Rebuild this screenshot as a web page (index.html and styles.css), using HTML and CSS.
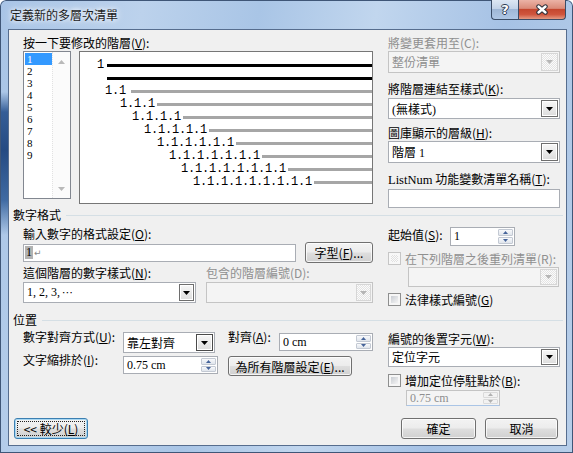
FILE: index.html
```html
<!DOCTYPE html>
<html lang="zh-Hant">
<head>
<meta charset="utf-8">
<title>定義新的多層次清單</title>
<link rel="stylesheet" href="styles.css">
</head>
<body>
<div class="window">
  <div class="titlebar">
    <div class="title">定義新的多層次清單</div>
    <div class="caption">
      <div class="cap cap-help">?</div>
      <div class="cap cap-close">
        <svg width="14" height="11" viewBox="0 0 14 11"><path d="M3.5 2.5L10.5 8.5M10.5 2.5L3.5 8.5" stroke="#2b2f3a" stroke-width="4.4" stroke-linecap="round"/><path d="M3.5 2.5L10.5 8.5M10.5 2.5L3.5 8.5" stroke="#fff" stroke-width="2.4" stroke-linecap="round"/></svg>
      </div>
    </div>
  </div>

  <div class="client">
    <div class="two">
      <div class="col">
        <div class="lbl">按一下要修改的階層(<u>V</u>):</div>
        <div class="lists">
          <div class="listbox">
            <div class="items">
              <div class="item sel">1</div>
              <div class="item">2</div>
              <div class="item">3</div>
              <div class="item">4</div>
              <div class="item">5</div>
              <div class="item">6</div>
              <div class="item">7</div>
              <div class="item">8</div>
              <div class="item">9</div>
            </div>
            <div class="vscroll">
              <svg width="7" height="4" viewBox="0 0 7 4"><path d="M3.5 0L7 4H0z"/></svg>
              <svg width="7" height="4" viewBox="0 0 7 4"><path d="M0 0h7L3.5 4z"/></svg>
            </div>
          </div>
          <div class="preview">
            <div class="pv lv1"><span class="num">1</span><span class="bar black"></span></div>
            <div class="pv lv1c"><span class="bar black"></span></div>
            <div class="pv lv2"><span class="num">1.1</span><span class="bar"></span></div>
            <div class="pv lv3"><span class="num">1.1.1</span><span class="bar"></span></div>
            <div class="pv lv4"><span class="num">1.1.1.1</span><span class="bar"></span></div>
            <div class="pv lv5"><span class="num">1.1.1.1.1</span><span class="bar"></span></div>
            <div class="pv lv6"><span class="num">1.1.1.1.1.1</span><span class="bar"></span></div>
            <div class="pv lv7"><span class="num">1.1.1.1.1.1.1</span><span class="bar"></span></div>
            <div class="pv lv8"><span class="num">1.1.1.1.1.1.1.1</span><span class="bar"></span></div>
            <div class="pv lv9"><span class="num">1.1.1.1.1.1.1.1.1</span><span class="bar"></span></div>
          </div>
        </div>
      </div>

      <div class="col">
        <div class="lbl dis">將變更套用至(C):</div>
        <div class="combo dis h22 mt1"><span class="val">整份清單</span><span class="dd"><svg width="7" height="4" viewBox="0 0 7 4"><path d="M0 0h7L3.5 4z"/></svg></span></div>
        <div class="lbl mt9">將階層連結至樣式(<u>K</u>):</div>
        <div class="combo h21 mt2"><span class="val">(無樣式)</span><span class="dd"><svg width="7" height="4" viewBox="0 0 7 4"><path d="M0 0h7L3.5 4z"/></svg></span></div>
        <div class="lbl mt7">圖庫顯示的層級(<u>H</u>):</div>
        <div class="combo h22 mt1"><span class="val">階層 1</span><span class="dd"><svg width="7" height="4" viewBox="0 0 7 4"><path d="M0 0h7L3.5 4z"/></svg></span></div>
        <div class="lbl mt9"><span class="lat">ListNum</span> 功能變數清單名稱(<u>T</u>):</div>
        <div class="textbox h19 mt3"></div>
      </div>
    </div>

    <div class="ghead"><span>數字格式</span></div>
    <div class="two">
      <div class="col">
        <div class="lbl mt5">輸入數字的格式設定(<u>O</u>):</div>
        <div class="split mt1">
          <div class="textbox fmt"><span class="selnum">1</span><span class="para">↵</span></div>
          <div class="btn font-btn">字型(<u>F</u>)...</div>
        </div>
        <div class="style-labels mt3">
          <div class="lbl">這個階層的數字樣式(<u>N</u>):</div>
          <div class="lbl dis">包含的階層編號(D):</div>
        </div>
        <div class="split mt2">
          <div class="combo h21 numstyle"><span class="val">1, 2, 3, <span class="ell">⋯</span></span><span class="dd narrow"><svg width="7" height="4" viewBox="0 0 7 4"><path d="M0 0h7L3.5 4z"/></svg></span></div>
          <div class="combo dis h21 incl"><span class="val"></span><span class="dd narrow"><svg width="7" height="4" viewBox="0 0 7 4"><path d="M0 0h7L3.5 4z"/></svg></span></div>
        </div>
      </div>

      <div class="col">
        <div class="start-row mt5">
          <div class="lbl">起始值(<u>S</u>):</div>
          <div class="spin h19 start"><span class="val">1</span><span class="spinbtns"><span class="sb"><svg width="5" height="3" viewBox="0 0 5 3"><path d="M2.5 0L5 3H0z"/></svg></span><span class="sb"><svg width="5" height="3" viewBox="0 0 5 3"><path d="M0 0h5L2.5 3z"/></svg></span></span></div>
        </div>
        <div class="check-row dis mt5"><span class="cb"></span><span>在下列階層之後重列清單(R):</span></div>
        <div class="combo dis h20 restart mt2"><span class="val"></span><span class="dd"><svg width="7" height="4" viewBox="0 0 7 4"><path d="M0 0h7L3.5 4z"/></svg></span></div>
        <div class="check-row mt5"><span class="cb"></span><span>法律樣式編號(<u>G</u>)</span></div>
      </div>
    </div>

    <div class="ghead mt7"><span>位置</span></div>
    <div class="two">
      <div class="pos-grid mt5">
        <div class="lbl up2">數字對齊方式(<u>U</u>):</div>
        <div class="combo h21 align-combo"><span class="val">靠左對齊</span><span class="dd strong"><svg width="7" height="4" viewBox="0 0 7 4"><path d="M0 0h7L3.5 4z"/></svg></span></div>
        <div class="lbl up2">對齊(<u>A</u>):</div>
        <div class="spin h18 at-spin mt1"><span class="val">0 cm</span><span class="spinbtns"><span class="sb"><svg width="5" height="3" viewBox="0 0 5 3"><path d="M2.5 0L5 3H0z"/></svg></span><span class="sb"><svg width="5" height="3" viewBox="0 0 5 3"><path d="M0 0h5L2.5 3z"/></svg></span></span></div>
        <div class="lbl up3">文字縮排於(<u>I</u>):</div>
        <div class="spin h18 indent-spin"><span class="val">0.75 cm</span><span class="spinbtns"><span class="sb"><svg width="5" height="3" viewBox="0 0 5 3"><path d="M2.5 0L5 3H0z"/></svg></span><span class="sb"><svg width="5" height="3" viewBox="0 0 5 3"><path d="M0 0h5L2.5 3z"/></svg></span></span></div>
        <div class="btn all-btn">為所有階層設定(<u>E</u>)...</div>
      </div>

      <div class="col">
        <div class="lbl mt5">編號的後置字元(<u>W</u>):</div>
        <div class="combo h20 mt1"><span class="val">定位字元</span><span class="dd"><svg width="7" height="4" viewBox="0 0 7 4"><path d="M0 0h7L3.5 4z"/></svg></span></div>
        <div class="check-row mt6"><span class="cb"></span><span>增加定位停駐點於(<u>B</u>):</span></div>
        <div class="spin dis h16 tab-spin mt3"><span class="val">0.75 cm</span><span class="spinbtns"><span class="sb"><svg width="5" height="3" viewBox="0 0 5 3"><path d="M2.5 0L5 3H0z"/></svg></span><span class="sb"><svg width="5" height="3" viewBox="0 0 5 3"><path d="M0 0h5L2.5 3z"/></svg></span></span></div>
      </div>
    </div>

    <div class="footer">
      <div class="btn default less"><span class="focus">&lt;&lt; 較少(<u>L</u>)</span></div>
      <div class="actions">
        <div class="btn ok">確定</div>
        <div class="btn cancel">取消</div>
      </div>
    </div>
  </div>
</div>
</body>
</html>
```

FILE: styles.css
```css
* { box-sizing: border-box; }
html, body { margin: 0; padding: 0; overflow: hidden; }
body {
  font-family: "Noto Sans CJK TC", "Noto Sans", sans-serif;
  font-size: 12px;
  color: #000;
  background: #fff;
}
u { text-underline-offset: 1px; }

.window {
  width: 573px;
  height: 453px;
  display: flex;
  flex-direction: column;
  border-radius: 6px 6px 0 0;
  background:
    linear-gradient(to bottom, rgba(35,75,135,0) 92px, rgba(40,82,142,.9) 112px, rgba(30,68,125,.95) 150px, rgba(45,90,150,.85) 200px, rgba(60,100,160,0) 235px) 0 0 / 8px 100% no-repeat,
    linear-gradient(100deg, #a8c4e6 0%, #bcd2ec 22%, #a9c5e6 40%, #c1d6ee 58%, #a6c2e5 78%, #b7cee9 100%);
  box-shadow: inset 0 0 0 1px #3f5677;
}

/* title bar */
.titlebar {
  height: 29px;
  flex: none;
  display: flex;
  justify-content: space-between;
  align-items: flex-start;
  padding-left: 10px;
}
.title {
  margin-top: 7px;
  line-height: 16px;
  color: #1c1c1c;
  text-shadow: 0 0 4px #fff, 0 0 8px rgba(255,255,255,.9);
}
.caption { display: flex; margin-right: 7px; }
.cap {
  height: 20px;
  display: flex;
  align-items: center;
  justify-content: center;
  border: 1px solid #3a4c66;
  border-top: none;
}
.cap-help {
  width: 27px;
  border-right: none;
  border-radius: 0 0 0 4px;
  background: linear-gradient(#dde7f3 0%, #c3d3e8 45%, #9fb7d6 50%, #afc7e5 100%);
  color: #fff;
  font: bold 13px "DejaVu Sans", sans-serif;
  text-shadow: 1px 0 #2c3b52, -1px 0 #2c3b52, 0 1px #2c3b52, 0 -1px #2c3b52;
}
.cap-close {
  width: 48px;
  border-radius: 0 0 4px 0;
  background: linear-gradient(#ebb3a6 0%, #da8b79 44%, #c4472f 50%, #cf553d 76%, #e49a83 100%);
}

/* client area */
.client {
  flex: none;
  width: 559px;
  height: 417px;
  margin-left: 8px;
  background: #f0f0f0;
  border: 1px solid #566d8e;
  display: flex;
  flex-direction: column;
  padding: 6px 6px 6px 14px;
}
.two {
  display: grid;
  grid-template-columns: 350px 172px;
  column-gap: 15px;
  align-items: start;
}
.col { display: flex; flex-direction: column; }

.lbl { height: 14px; line-height: 14px; white-space: nowrap; }
.dis { color: #8f8f8f; }
.lat, .val { font-family: "Liberation Serif", "Noto Sans CJK TC", serif; }
.lat { font-size: 12.5px; }

.mt1 { margin-top: 1px; }
.mt2 { margin-top: 2px; }
.mt3 { margin-top: 3px; }
.mt5 { margin-top: 5px; }
.mt6 { margin-top: 6px; }
.mt7 { margin-top: 7px; }
.mt9 { margin-top: 9px; }
.up2 { margin-top: -2px; }
.up3 { margin-top: -3px; }

.h16 { height: 16px; }
.h18 { height: 18px; }
.h19 { height: 19px; }
.h20 { height: 20px; }
.h21 { height: 21px; }
.h22 { height: 22px; }

/* level list + preview */
.lists { display: flex; align-items: flex-start; margin-top: 1px; }
.listbox {
  width: 48px;
  height: 148px;
  border: 1px solid #828790;
  background: #fff;
  display: flex;
}
.items { width: 28px; padding: 1px 0 0 1px; font-family: "Liberation Serif", serif; font-size: 11px; }
.item { height: 12px; line-height: 12px; padding-left: 2px; overflow: hidden; }
.item.sel { background: #3399ff; color: #fff; }
.vscroll {
  width: 18px;
  border-left: 1px dotted #e2e2e2;
  background: #fbfbfb;
  display: flex;
  flex-direction: column;
  align-items: center;
  justify-content: space-between;
  padding: 8px 0 7px;
  fill: #b9b9b9;
}
.preview {
  width: 294px;
  height: 153px;
  margin-left: 8px;
  border: 1px solid #767676;
  background: #fff;
  padding-top: 7px;
}
.pv { height: 13px; display: flex; align-items: center; }
.num { font-family: "Liberation Mono", monospace; font-size: 12px; letter-spacing: -0.2px; line-height: 13px; white-space: pre; }
.bar { flex: 1; height: 3px; background: #a6a6a6; margin-left: 2px; }
.bar.black { background: #000; }
.lv1 { padding-left: 17px; }
.lv1 .bar { margin-left: 3px; }
.lv1c { padding-left: 27px; }
.lv1c .bar { margin-left: 0; }
.lv2 { padding-left: 25px; }
.lv2 .bar { margin-left: 5px; }
.lv3 { padding-left: 40px; }
.lv4 { padding-left: 52px; }
.lv5 { padding-left: 64px; }
.lv6 { padding-left: 77px; }
.lv7 { padding-left: 89px; }
.lv8 { padding-left: 101px; }
.lv9 { padding-left: 113px; }

/* combo boxes */
.combo {
  display: flex;
  border: 1px solid #a9adb4;
  background: #fff;
}
.combo .val { flex: 1; padding-left: 3px; display: flex; align-items: center; white-space: nowrap; }
.dd {
  width: 17px;
  margin: 1px;
  border: 1px solid #6e6e6e;
  background: linear-gradient(#f7f7f7, #dcdcdc);
  box-shadow: inset 0 0 0 1px #fff;
  display: flex;
  align-items: center;
  justify-content: center;
  fill: #000;
}
.dd.narrow { width: 15px; }
.dd.strong { border-color: #4a4a4a; }
.combo.dis { background: #f4f4f4; border-color: #c4c4c4; color: #8f8f8f; }
.combo.dis .dd {
  border-color: #d6d6d6;
  box-shadow: none;
  background: repeating-conic-gradient(#e4e4e4 0 25%, #fbfbfb 0 50%) 0 0 / 2px 2px;
  fill: #b5b5b5;
}
.ell { font-family: "DejaVu Sans", sans-serif; font-size: 11px; margin-left: 2px; }

.textbox { border: 1px solid #a9adb4; background: #fff; }
.split { display: flex; justify-content: space-between; align-items: center; }
.fmt { width: 273px; height: 18px; display: flex; align-items: center; padding-left: 1px; }
.selnum { font-family: "Liberation Serif", serif; background: #b2b2b2; height: 13px; line-height: 13px; padding: 0 1px; }
.para { color: #8a8a8a; font-family: "DejaVu Sans", sans-serif; font-size: 9px; margin-left: 1px; }
.style-labels { display: grid; grid-template-columns: 183px auto; }
.numstyle { width: 173px; }
.incl { width: 167px; }

/* buttons */
.btn {
  height: 21px;
  border: 1px solid #707070;
  border-radius: 3px;
  background: linear-gradient(#f3f3f3 0%, #ececec 48%, #dedede 52%, #d0d0d0 100%);
  box-shadow: inset 0 0 0 1px rgba(255,255,255,.75);
  display: flex;
  align-items: center;
  justify-content: center;
  white-space: nowrap;
}
.font-btn { width: 68px; }
.all-btn { width: 124px; height: 20px; grid-column: 3 / span 2; }

/* spin boxes */
.spin { display: flex; border: 1px solid #a9adb4; background: #fff; }
.spin .val { flex: 1; padding-left: 3px; display: flex; align-items: center; white-space: nowrap; }
.spinbtns { width: 15px; margin: 1px; display: flex; flex-direction: column; gap: 1px; }
.sb {
  flex: 1;
  border: 1px solid #c3c9d3;
  border-radius: 1px;
  background: linear-gradient(#f8f9fb, #e0e5ec);
  display: flex;
  align-items: center;
  justify-content: center;
  fill: #46649a;
}
.spin.dis { background: #f4f4f4; border-color: #c4c4c4; border-bottom-color: #aac5e6; color: #8f8f8f; }
.spin.dis .sb { border-color: #dadada; background: #f2f2f2; fill: #b0b0b0; }
.start-row { display: flex; align-items: flex-start; }
.start-row .lbl { width: 62px; margin-top: 1px; }
.start { width: 65px; }
.at-spin { width: 94px; }
.indent-spin { width: 95px; }
.tab-spin { width: 94px; margin-left: 18px; }

/* checkboxes */
.check-row { display: flex; align-items: center; height: 14px; gap: 4px; white-space: nowrap; }
.cb {
  width: 13px;
  height: 13px;
  flex: none;
  border: 1px solid #8e8f8f;
  padding: 2px;
  background: linear-gradient(135deg, #c9cdd3, #f4f4f4) content-box, #f6f6f6;
}
.check-row.dis .cb {
  border-color: #c6c6c6;
  background: repeating-conic-gradient(#e0e0e0 0 25%, #fafafa 0 50%) 0 0 / 2px 2px content-box, #f7f7f7;
}
.restart { width: 151px; margin-left: 20px; }

/* group headers */
.ghead {
  display: flex;
  align-items: center;
  height: 14px;
  line-height: 14px;
  margin-left: -10px;
  margin-right: -3px;
}
.ghead span { padding-right: 5px; }
.ghead::after { content: ""; flex: 1; height: 1px; background: #d5dfe5; }

/* position grid */
.pos-grid {
  display: grid;
  grid-template-columns: 100px 105px 51px 94px;
  row-gap: 3px;
  align-items: start;
}
.align-combo { width: 92px; }

/* footer */
.footer {
  margin-top: auto;
  margin-left: -9px;
  margin-right: 2px;
  display: flex;
  justify-content: space-between;
}
.actions { display: flex; gap: 9px; }
.less { width: 74px; border-color: #3c7fb1; box-shadow: inset 0 0 0 1px #a8d8f3; padding: 2px; }
.less .focus {
  flex: 1;
  align-self: stretch;
  border: 1px dotted #222;
  display: flex;
  align-items: center;
  justify-content: center;
}
.ok { width: 75px; }
.cancel { width: 73px; }
```
